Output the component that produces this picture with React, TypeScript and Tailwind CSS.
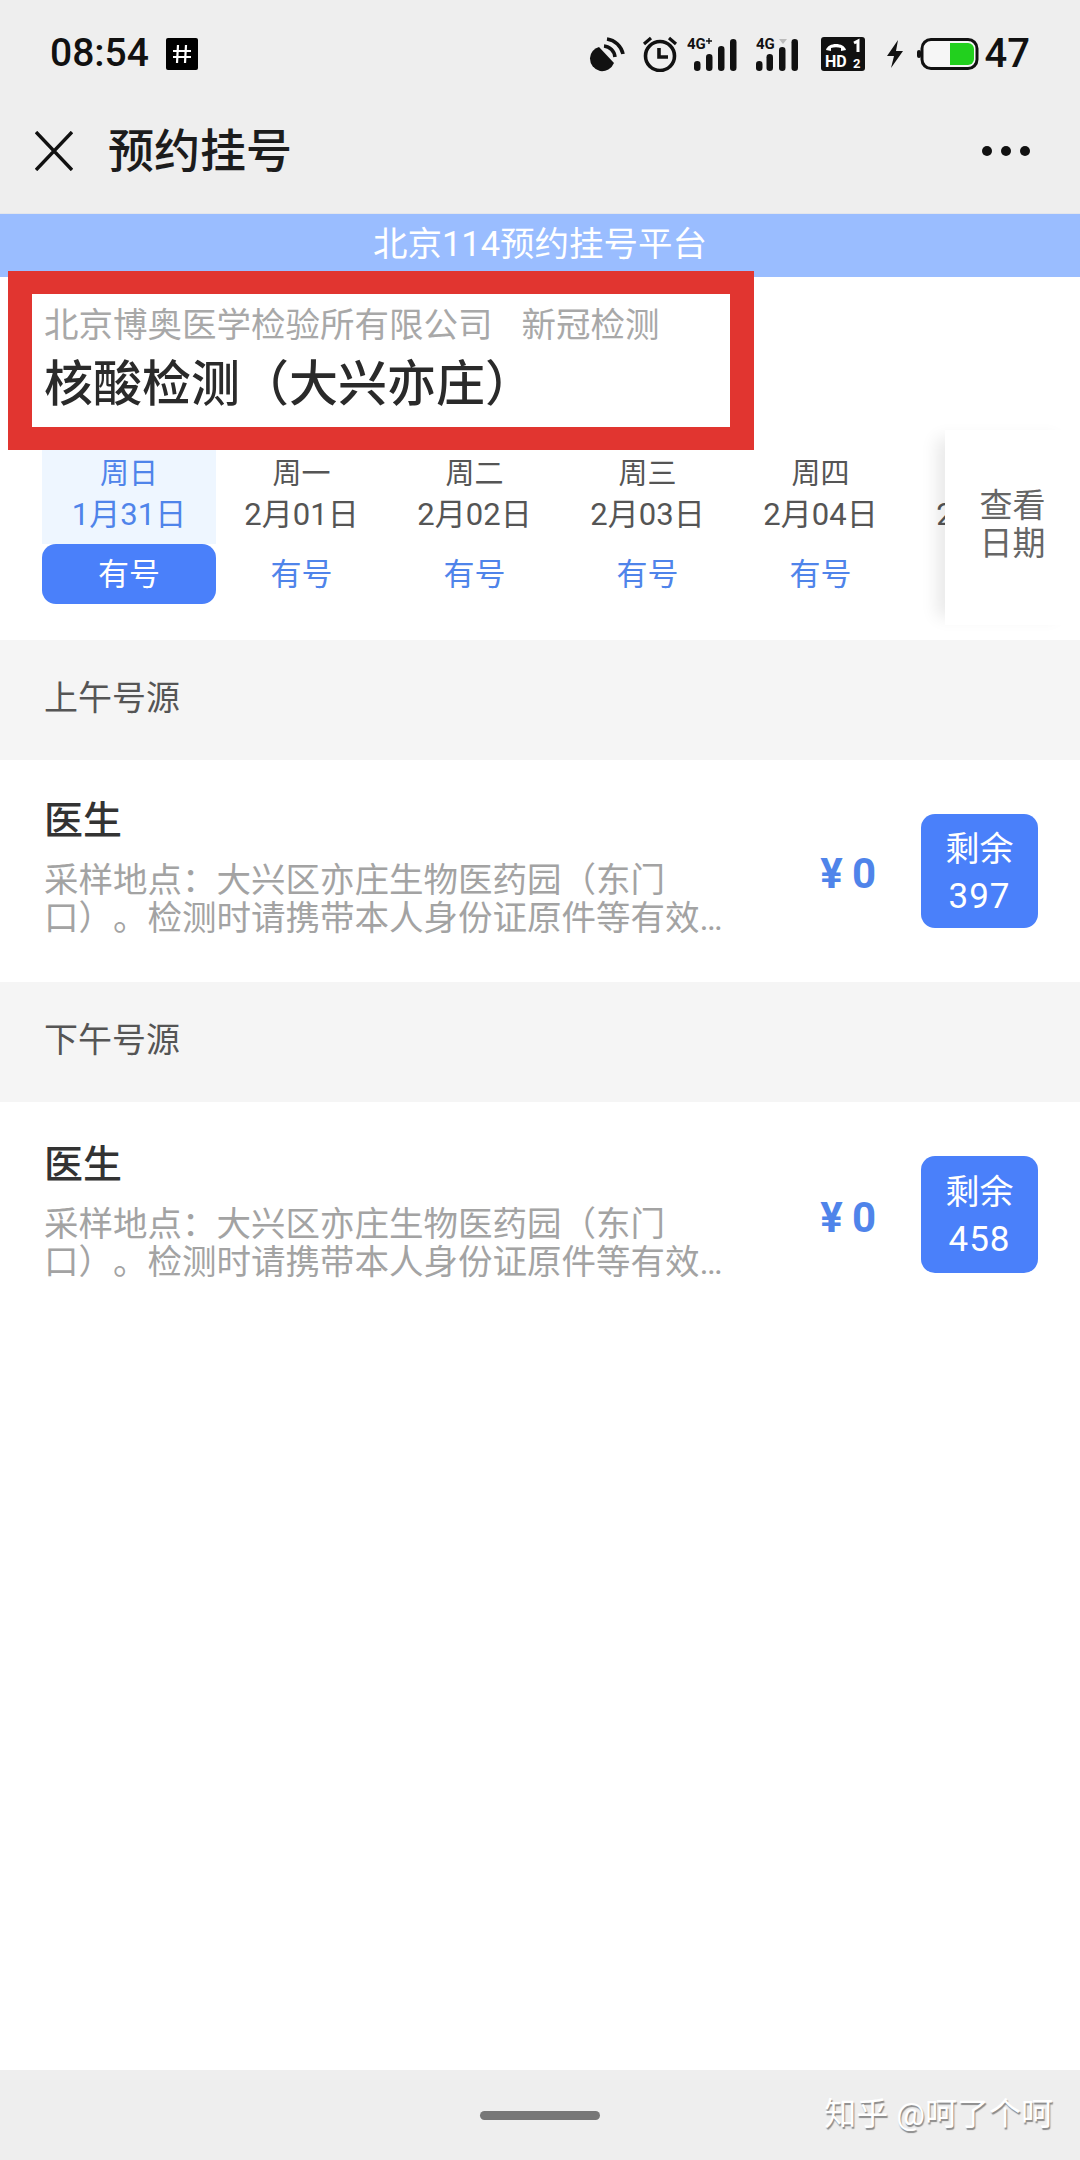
import React from "react";

const days = [
  { week: "周日", date: "1月31日" },
  { week: "周一", date: "2月01日" },
  { week: "周二", date: "2月02日" },
  { week: "周三", date: "2月03日" },
  { week: "周四", date: "2月04日" },
  { week: "周五", date: "2月05日" },
];

const desc =
  "采样地点：大兴区亦庄生物医药园（东门口）。检测时请携带本人身份证原件等有效证件，按预约时段前往采样。";

const StatusBar = () => (
  <div className="flex h-[106px] items-center justify-between pl-[50px] pr-[50px] pt-[1px]">
    <div className="flex items-center gap-[17px]">
      <span className="text-[39px] font-medium leading-none text-[#111]">08:54</span>
      <svg width="32" height="32" viewBox="0 0 32 32">
        <rect width="32" height="32" rx="2" fill="#000" />
        <path d="M12 7l-1 18M20 7l-1 18M7 13h18M7 19h18" stroke="#fff" strokeWidth="2.2" fill="none" />
      </svg>
    </div>
    <div className="flex items-center">
      <svg width="36" height="36" viewBox="0 0 36 36">
        <path d="M10 11 L25 27 A13 13 0 0 1 11 35 A13 13 0 0 1 1 22 A12 12 0 0 1 10 11Z" fill="#111" />
        <path d="M15 10a12 12 0 0 1 11 11M18 3a19 19 0 0 1 16 15" stroke="#111" strokeWidth="3.6" fill="none" />
      </svg>
      <svg className="ml-[17px]" width="36" height="36" viewBox="0 0 36 36">
        <circle cx="18" cy="20" r="14.5" stroke="#111" strokeWidth="3.6" fill="none" />
        <path d="M17 12v9h9" stroke="#111" strokeWidth="3.6" fill="none" />
        <path d="M2 8l7-6M34 8l-7-6" stroke="#111" strokeWidth="3.2" fill="none" />
      </svg>
      <svg className="ml-[9px]" width="51" height="36" viewBox="0 0 51 36">
        <text x="0" y="13" fontSize="15" fontWeight="700" fontFamily="Roboto, sans-serif" fill="#111">
          4G
        </text>
        <path d="M19 5h6M22 2v6" stroke="#111" strokeWidth="1.4" fill="none" />
        <rect x="7" y="25" width="6.5" height="10" rx="3.2" fill="#111" />
        <rect x="19" y="18" width="6.5" height="17" rx="3.2" fill="#111" />
        <rect x="31" y="10" width="6.5" height="25" rx="3.2" fill="#111" />
        <rect x="43" y="3" width="6.5" height="32" rx="3.2" fill="#111" />
      </svg>
      <svg className="ml-[18px]" width="43" height="36" viewBox="0 0 43 36">
        <text x="0" y="13" fontSize="15" fontWeight="700" fontFamily="Roboto, sans-serif" fill="#111">
          4G
        </text>
        <path d="M23 3h8l-4 5z" fill="#bbb" />
        <rect x="0" y="25" width="6.5" height="10" rx="3.2" fill="#111" />
        <rect x="10.5" y="18" width="6.5" height="17" rx="3.2" fill="#111" />
        <rect x="23" y="11" width="6.5" height="24" rx="3.2" fill="#111" />
        <rect x="35.5" y="3" width="6.5" height="32" rx="3.2" fill="#111" />
      </svg>
      <svg className="ml-[22px]" width="44" height="34" viewBox="0 0 44 34">
        <rect width="44" height="34" rx="3" fill="#111" />
        <path d="M5 13c2-8 18-8 20 0l-5 1v-3c-3-1-7-1-10 0v3z" fill="#fff" />
        <path d="M33 6l4-2v11" stroke="#fff" strokeWidth="3" fill="none" />
        <text x="4" y="30" fontSize="16" fontWeight="700" fontFamily="Roboto, sans-serif" fill="#fff">
          HD
        </text>
        <text x="32" y="31" fontSize="13" fontWeight="700" fontFamily="Roboto, sans-serif" fill="#fff">
          2
        </text>
      </svg>
      <svg className="ml-[21px]" width="18" height="28" viewBox="0 0 18 28">
        <path d="M12 0 L1 16 H8 L5 28 L17 11 H10Z" fill="#111" />
      </svg>
      <svg className="ml-[13px]" width="62" height="32" viewBox="0 0 62 32">
        <rect x="0" y="12" width="4" height="8" rx="2" fill="#111" />
        <rect x="5" y="1.5" width="55" height="29" rx="9" stroke="#111" strokeWidth="3" fill="#f6f6f6" />
        <path d="M33 5h18a6 6 0 0 1 6 6v10a6 6 0 0 1-6 6H33z" fill="#22d01e" />
      </svg>
      <span className="ml-[6px] text-[40px] font-medium leading-none text-[#111]">47</span>
    </div>
  </div>
);

const NavBar = () => (
  <div className="flex h-[108px] items-center justify-between border-b border-[#e3e6ec] pb-[18px] pl-[35px] pr-[50px]">
    <div className="flex items-center gap-[35px]">
      <svg width="38" height="40" viewBox="0 0 38 40">
        <path d="M1 1l36 38M37 1L1 39" stroke="#111" strokeWidth="3.4" fill="none" />
      </svg>
      <span className="text-[46px] font-medium leading-none text-[#1c1c1c]">预约挂号</span>
    </div>
    <div className="flex gap-[9px]">
      <span className="h-[10px] w-[10px] rounded-full bg-[#111]" />
      <span className="h-[10px] w-[10px] rounded-full bg-[#111]" />
      <span className="h-[10px] w-[10px] rounded-full bg-[#111]" />
    </div>
  </div>
);

const DayStrip = () => (
  <div className="relative flex h-[194px] bg-white pl-[42px]">
    <div className="flex w-[903px] overflow-hidden">
      {days.map((d, i) => (
        <div
          key={d.date}
          className={
            i === 0
              ? "mr-[-1px] flex w-[174px] shrink-0 flex-col items-center"
              : "flex w-[173px] shrink-0 flex-col items-center"
          }
        >
          <div
            className={
              i === 0
                ? "flex h-[98px] w-full flex-col items-center bg-[#eef6ff] pt-[13px] text-[#4f84ea]"
                : "flex h-[98px] w-full flex-col items-center pt-[13px] text-[#555555]"
            }
          >
            <span className="text-[29px] leading-[30px]">{d.week}</span>
            <span className="mt-[11px] text-[31px] leading-[30px] whitespace-nowrap">{d.date}</span>
          </div>
          <div
            className={
              i === 0
                ? "flex h-[60px] w-full items-center justify-center rounded-[14px] bg-[#4a80fa] pt-[3px] text-[31px] text-white"
                : "flex h-[60px] w-full items-center justify-center pt-[3px] text-[31px] text-[#4f84ea]"
            }
          >
            有号
          </div>
        </div>
      ))}
    </div>
    <div className="absolute right-0 top-[-16px] flex h-[195px] w-[135px] flex-col items-center justify-center bg-white pb-[6px] text-[33px] leading-[38px] text-[#666666] shadow-[-16px_0_16px_-8px_rgba(0,0,0,0.09)]">
      <span>查看</span>
      <span>日期</span>
    </div>
  </div>
);

const SectionHeader = ({ title }: { title: string }) => (
  <div className="flex h-[120px] items-center bg-[#f5f5f5] pb-[3px] pl-[44px] text-[34px] text-[#555555]">{title}</div>
);

const Row = ({ left, rowClass, badgeClass }: { left: number; rowClass: string; badgeClass: string }) => (
  <div className={`flex items-center bg-white pl-[44px] pr-[42px] ${rowClass}`}>
    <div className="w-[680px] pb-[9px]">
      <div className="text-[39px] font-medium leading-[50px] text-[#333333]">医生</div>
      <p className="mt-[15px] line-clamp-2 text-[34.5px] leading-[38px] text-[#a3a3a3] [text-spacing-trim:space-all]">
        {desc}
      </p>
    </div>
    <div className="ml-auto mr-[45px] flex items-baseline pt-[6px] font-bold text-[#4f84ea]">
      <span className="text-[42px] leading-none">¥</span>
      <span className="ml-[9px] text-[42px] leading-none">0</span>
    </div>
    <div
      className={`flex w-[117px] flex-col items-center justify-center rounded-[14px] bg-[#4a80fa] pt-[3px] text-[34px] leading-[48px] text-white ${badgeClass}`}
    >
      <span>剩余</span>
      <span className="text-[35px] tracking-[1px]">{left}</span>
    </div>
  </div>
);

const App: React.FC = () => {
  return (
    <div
      className="relative flex h-[2160px] w-[1080px] flex-col overflow-hidden bg-white"
      style={{ fontFamily: '"Roboto", "Noto Sans CJK SC", sans-serif' }}
    >
      <div className="bg-[#eeeeee]">
        <StatusBar />
        <NavBar />
      </div>
      <div className="flex h-[63px] items-center justify-center bg-[#9abdff] pb-[1px] text-[34.5px] text-white">
        北京114预约挂号平台
      </div>
      <div className="h-[169px] bg-white pl-[44px] pt-[26px]">
        <div className="flex gap-[29px] text-[34.5px] leading-[44px] text-[#a8a8a8]">
          <span>北京博奥医学检验所有限公司</span>
          <span>新冠检测</span>
        </div>
        <div className="mt-[8px] text-[49px] font-medium leading-[60px] text-[#2a2a2a] [text-spacing-trim:space-all]">
          核酸检测（大兴亦庄）
        </div>
      </div>
      <DayStrip />
      <SectionHeader title="上午号源" />
      <Row left={397} rowClass="h-[222px]" badgeClass="h-[114px]" />
      <SectionHeader title="下午号源" />
      <Row left={458} rowClass="h-[225px]" badgeClass="h-[117px]" />
      <div className="flex-1" />
      <div className="relative flex h-[90px] items-center justify-center bg-[#eeeeee]">
        <span className="h-[9px] w-[120px] rounded-full bg-[#777777]" />
        <span className="absolute right-[27px] top-[24px] text-[32px] leading-[40px] text-white [text-shadow:1px_2px_1px_#8a8a8a]">
          知乎 @呵了个呵
        </span>
      </div>
      <div className="absolute left-[8px] top-[271px] h-[179px] w-[746px] border-x-[24px] border-y-[23px] border-[#e13530]" />
    </div>
  );
};

export default App;
